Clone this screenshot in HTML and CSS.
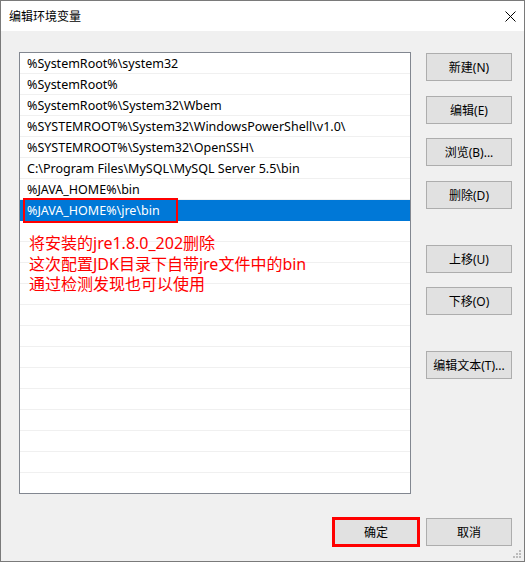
FILE: index.html
```html
<!DOCTYPE html>
<html lang="zh-CN">
<head>
  <meta charset="UTF-8" />
  <title>编辑环境变量</title>
  <link rel="stylesheet" href="styles.css">
</head>
<body>

  <div class="dialog">
    <div class="titlebar">
      <span class="title">编辑环境变量</span>
      <svg class="close" width="11" height="11" viewBox="0 0 11 11">
        <path d="M0.5 0.5 L10.5 10.5 M10.5 0.5 L0.5 10.5" stroke="#000" stroke-width="1" fill="none" />
      </svg>
    </div>

    <div class="content">
      <div class="main">
        <div class="list">
          <div class="row">%SystemRoot%\system32</div>
          <div class="row">%SystemRoot%</div>
          <div class="row">%SystemRoot%\System32\Wbem</div>
          <div class="row">%SYSTEMROOT%\System32\WindowsPowerShell\v1.0\</div>
          <div class="row">%SYSTEMROOT%\System32\OpenSSH\</div>
          <div class="row">C:\Program Files\MySQL\MySQL Server 5.5\bin</div>
          <div class="row">%JAVA_HOME%\bin</div>
          <div class="row selected">%JAVA_HOME%\jre\bin</div>
          <div class="row"></div>
          <div class="row"></div>
          <div class="row"></div>
          <div class="row"></div>
          <div class="row"></div>
          <div class="row"></div>
          <div class="row"></div>
          <div class="row"></div>
          <div class="row"></div>
          <div class="row"></div>
          <div class="row"></div>
          <div class="row"></div>
          <div class="row"></div>

          <!-- annotations drawn over the list -->
          <div class="mark-row"></div>
          <div class="note">
            将安装的jre1.8.0_202删除<br>
            这次配置JDK目录下自带jre文件中的bin<br>
            通过检测发现也可以使用
          </div>
        </div>

        <div class="side">
          <button class="btn">新建(N)</button>
          <button class="btn">编辑(E)</button>
          <button class="btn">浏览(B)...</button>
          <button class="btn">删除(D)</button>
          <button class="btn group">上移(U)</button>
          <button class="btn">下移(O)</button>
          <button class="btn group">编辑文本(T)...</button>
        </div>
      </div>

      <div class="footer">
        <button class="btn marked">确定</button>
        <button class="btn">取消</button>
      </div>
    </div>

    <svg class="grip" width="9" height="9" viewBox="0 0 9 9">
      <rect x="6" y="0" width="2" height="2" fill="#bcbcbc" />
      <rect x="3" y="3" width="2" height="2" fill="#bcbcbc" />
      <rect x="6" y="3" width="2" height="2" fill="#bcbcbc" />
      <rect x="0" y="6" width="2" height="2" fill="#bcbcbc" />
      <rect x="3" y="6" width="2" height="2" fill="#bcbcbc" />
      <rect x="6" y="6" width="2" height="2" fill="#bcbcbc" />
    </svg>
  </div>

</body>
</html>
```

FILE: styles.css
```css
body {
  margin: 0;
  font-family: 'Noto Sans', 'Noto Sans CJK SC', sans-serif;
  font-size: 12px;
  color: #000;
  background-color: #fff;
}

.dialog {
  position: relative;
  width: 525px;
  height: 562px;
  box-sizing: border-box;
  border: 1px solid #7a7a7a;
  background-color: #f0f0f0;
  display: flex;
  flex-direction: column;
}

.titlebar {
  height: 30px;
  background-color: #fff;
  display: flex;
  align-items: center;
  justify-content: space-between;
  padding: 0 8px 0 8px;
}

.title {
  font-size: 12px;
}

.close {
  margin-top: 0;
}

.content {
  flex: 1;
  padding: 21px 12px 0 18px;
}

.main {
  display: flex;
  gap: 15px;
}

.list {
  position: relative;
  width: 392px;
  height: 442px;
  box-sizing: border-box;
  border: 1px solid #828790;
  background-color: #fff;
  overflow: hidden;
}

.row {
  height: 21px;
  box-sizing: border-box;
  border-bottom: 1px solid #f0f0f0;
  padding-left: 7px;
  font-size: 12.5px;
  line-height: 22px;
  white-space: nowrap;
  overflow: hidden;
}

.row.selected {
  background-color: #0078d7;
  border-bottom-color: #0078d7;
  color: #fff;
}

.mark-row {
  position: absolute;
  left: 3px;
  top: 145px;
  width: 155px;
  height: 25px;
  box-sizing: border-box;
  border: 2px solid #f00;
}

.note {
  position: absolute;
  left: 9px;
  top: 180px;
  font-size: 16px;
  line-height: 20.5px;
  color: #f00;
  white-space: nowrap;
}

.side {
  display: flex;
  flex-direction: column;
  gap: 14.67px;
  padding-top: 1px;
}

.btn {
  width: 86px;
  height: 28px;
  box-sizing: border-box;
  border: 1px solid #adadad;
  background-color: #e1e1e1;
  font-family: 'Noto Sans', 'Noto Sans CJK SC', sans-serif;
  font-size: 12px;
  color: #000;
  padding: 0;
}

.btn.group {
  margin-top: 21px;
}

.btn.marked {
  outline: 3px solid #f00;
  outline-offset: -2px;
}

.footer {
  display: flex;
  justify-content: flex-end;
  gap: 7px;
  margin-top: 24px;
}

.grip {
  position: absolute;
  right: 2px;
  bottom: 2px;
}
```
